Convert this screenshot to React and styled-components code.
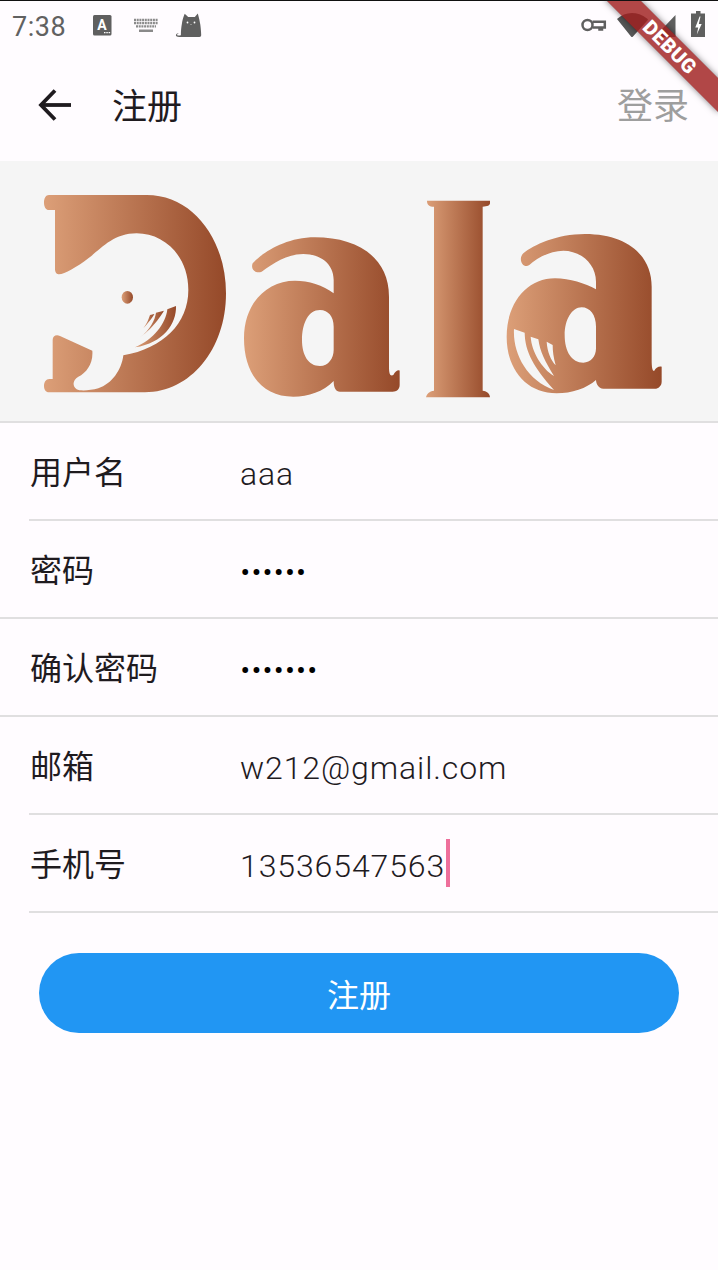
import React from "react";
import styled, { createGlobalStyle } from "styled-components";

const fields = [
  { label: "用户名", value: "aaa", inset: true },
  { label: "密码", value: "••••••", secret: true },
  { label: "确认密码", value: "•••••••", secret: true },
  { label: "邮箱", value: "w212@gmail.com", inset: true },
  { label: "手机号", value: "13536547563", inset: true, focused: true },
];

const GlobalStyle = createGlobalStyle`
  html, body {
    margin: 0;
    padding: 0;
    background: #fffcff;
  }
  * {
    box-sizing: border-box;
  }
`;

const BackIcon = () => (
  <svg width="36" height="36" viewBox="0 0 36 36" fill="none" stroke="#1f1b1f" strokeWidth="3.8">
    <path d="M34 18H5" />
    <path d="M18 3.5 4 18l14 14.500" />
  </svg>
);

// viewBox uses page coordinates so the glyphs can be read straight off the screenshot
const StatusLeftIcons = () => (
  <svg width="112" height="28" viewBox="91 12 112 28" fill="#5f5f5f">
    <rect x="93" y="15" width="18.500" height="20.500" rx="1.500" />
    <text x="102" y="30" fontFamily="Roboto" fontWeight="700" fontSize="14" fill="#fff" textAnchor="middle">A</text>
    <path d="M104 32h1.500v1.300H104zM106.300 32h1.500v1.300h-1.500zM108.600 32h1.500v1.300h-1.500z" fill="#fff" />
    <g stroke="#8a8a8a" strokeWidth="2.300" strokeDasharray="2 .7" fill="none">
      <path d="M134 20h24" />
      <path d="M134 23.200h24" />
      <path d="M136 26.400h20" />
    </g>
    <path d="M139 29.500h14v2.500h-14z" fill="#8a8a8a" />
    <path d="M182.600 37c-2.800 0-4.500-.2-5.800-.6-1-.4-1.200-1.700-.3-2.500.7-.6 1.700-.6 2.300-.1-.8-.1-1.500.2-1.700.8-.2.700.5 1 1.300 1h1.800c.4 0 .7-.3.700-.8 0-4 .4-8 1-11 .3-2.300.8-5.300 2.800-10l3.500 3.200h6.600l3-3.600c1.300 4.400 2 8 2.500 11 .5 3.600.8 7.400.9 10.600 0 1.200-.6 2-1.800 2z" />
    <circle cx="187.500" cy="22.500" r=".9" fill="#fff" />
    <circle cx="194.500" cy="22.500" r=".9" fill="#fff" />
    <path d="M190.200 24.200h1.600l-.8.800z" fill="#fff" />
  </svg>
);

const StatusRightIcons = () => (
  <svg width="128" height="36" viewBox="579 8 128 36" fill="#5f5f5f">
    <g fill="none" stroke="#5f5f5f" strokeWidth="2.500">
      <circle cx="587.500" cy="25" r="5" />
      <path d="M592.500 21.800H604.800V27.500H602V29.500H599.500V27.500H592.500" />
    </g>
    <path d="M617 19c8-7.500 20-8.200 30-.5 1 .8 1.200 1 .4 2L633 36.500c-.7.800-1.300.8-2 0z" fill="#575757" />
    <path d="M675.500 15V37H654.500z" />
    <path d="M696 13.500V11h4.500v2.500H705V37H691V13.500z" />
    <path d="M699.600 16.500l-4.300 11h2.900l-1.400 7 4.900-10.500h-2.900l1.700-7.500z" fill="#fff" />
  </svg>
);

const WhaleLogo = () => (
  <svg width="718" height="260" viewBox="0 0 718 260">
    <defs>
      <linearGradient id="copper">
        <stop offset="0" stopColor="#dc9f78" />
        <stop offset="1" stopColor="#954929" />
      </linearGradient>
    </defs>
    <g transform="translate(30 19) scale(0.33333)" fill="url(#copper)">
      <path d="M57 45H350C490 45 588 180 588 340C588 510 480 637 345 637H57C47 637 42 628 42 618C42 606 48 597 58 597H68V480C68 468 78 463 90 468L187 512C190 550 170 578 145 590C128 600 126 618 140 628C150 634 180 632 205 625C245 612 275 570 280 526C400 505 475 430 475 330C475 225 400 160 320 160C250 160 215 205 175 235C140 262 100 285 85 283C78 282 75 276 75 268V90H57C47 90 42 80 42 68C42 55 47 45 57 45Z" />
      <ellipse cx="292" cy="352" rx="17" ry="19" />
      <path d="M315 502C400 490 440 430 438 378L412 388C408 430 370 480 315 502Z" />
      <path d="M330 472C375 440 400 395 402 392L378 398C375 420 360 450 330 472Z" />
      <path d="M340 445C355 430 372 405 373 402L360 405C355 420 350 432 340 445Z" />
    </g>
    <g transform="translate(240 19) scale(0.33333)" fill="url(#copper)">
      <path d="M38 250C60 225 130 172 225 172C350 172 447 230 447 350V560C447 580 450 590 460 585C465 575 475 568 479 572V615C479 628 470 635 458 635H300C288 635 281 625 281 603C250 635 205 650 160 650C70 650 12 585 12 475C12 370 80 302 165 302C205 302 250 315 281 340V300C281 250 240 222 190 222C140 222 100 250 65 275C50 282 30 270 38 250Z M281 440C281 410 265 390 240 390C205 390 186 430 186 480C186 525 205 558 240 558C265 558 281 535 281 510Z" fillRule="evenodd" />
      <path d="M561 62H750V70C750 76 742 80 728 80V632C742 634 750 642 750 652H558C560 642 568 634 582 632V80C568 80 561 74 561 62Z" />
    </g>
    <g transform="translate(490 59) scale(0.33333)" fill="url(#copper)">
      <path
        fillRule="evenodd"
        d="M100 100C130 75 200 42 285 42C410 42 485 105 485 200V420C485 445 488 455 493 452C497 445 505 438 515 440V485C515 498 505 506 495 506H340C325 506 318 490 318 480C290 505 245 520 200 520C110 520 50 450 50 350C50 250 110 175 195 175C240 175 285 190 318 208V185C318 130 270 92 220 92C180 92 140 115 118 135C100 148 82 118 100 100Z M318 320C318 285 300 262 275 262C245 262 224 300 224 345C224 395 245 428 280 428C302 428 318 410 318 385Z M72 327C68 400 110 480 192 510C130 440 105 395 104 338Z M122 350C125 395 155 445 192 468C165 425 150 395 145 358Z M170 365C172 395 182 420 197 436C190 412 188 392 188 375Z"
      />
    </g>
  </svg>
);

export default function App() {
  return (
    <Page>
      <GlobalStyle />
      <StatusBar>
        <Clock>7:38</Clock>
        <StatusLeftIcons />
        <StatusRight>
          <StatusRightIcons />
        </StatusRight>
      </StatusBar>
      <AppBar>
        <BackButton>
          <BackIcon />
        </BackButton>
        <Title>注册</Title>
        <LoginLink>登录</LoginLink>
      </AppBar>
      <LogoBand>
        <WhaleLogo />
      </LogoBand>
      <Form>
        {fields.map((field) => (
          <Row key={field.label} $inset={field.inset}>
            <Label>{field.label}</Label>
            <Value $secret={field.secret}>
              {field.value}
              {field.focused && <Cursor />}
            </Value>
          </Row>
        ))}
      </Form>
      <SubmitWrap>
        <SubmitButton>注册</SubmitButton>
      </SubmitWrap>
      <DebugBanner>DEBUG</DebugBanner>
    </Page>
  );
}

const Page = styled.div`
  position: relative;
  width: 718px;
  height: 1270px;
  overflow: hidden;
  background: #fffcff;
  border-top: 1px solid #111;
  font-family: "Noto Sans CJK SC", Roboto, sans-serif;
`;

const StatusBar = styled.div`
  display: flex;
  align-items: center;
  height: 50px;
  padding-left: 12px;
`;

const Clock = styled.span`
  width: 79px;
  padding-top: 2px;
  font-family: Roboto, sans-serif;
  font-size: 27px;
  color: #616161;
  letter-spacing: 0.5px;
`;

const StatusRight = styled.div`
  display: flex;
  margin-left: auto;
  padding-right: 11px;
`;

const AppBar = styled.header`
  display: flex;
  align-items: center;
  height: 110px;
  padding: 0 29px 6px 37px;
`;

const BackButton = styled.div`
  display: flex;
  width: 75px;
  margin-top: 3px;
`;

const Title = styled.h1`
  margin: 0;
  font-size: 35px;
  font-weight: 400;
  color: #1f1b1f;
`;

const LoginLink = styled.span`
  margin-left: auto;
  font-size: 36px;
  color: #9e9e9e;
`;

const LogoBand = styled.div`
  display: flex;
  height: 262px;
  background: #f5f5f5;
  border-bottom: 2px solid #e0dfe0;
`;

const Form = styled.div`
  display: flex;
  flex-direction: column;
`;

const Row = styled.div`
  display: flex;
  align-items: center;
  height: 98px;
  margin-left: ${({ $inset }) => ($inset ? "29px" : "0")};
  padding-left: ${({ $inset }) => ($inset ? "1px" : "30px")};
  border-bottom: 2px solid #e0dfe0;
`;

const Label = styled.span`
  width: 210px;
  padding-bottom: 2px;
  font-size: 32px;
  color: #1f1b1f;
`;

const Value = styled.span`
  display: flex;
  align-items: center;
  padding-top: ${({ $secret }) => ($secret ? "5px" : "6px")};
  font-family: Roboto, sans-serif;
  font-size: 32px;
  font-weight: 300;
  letter-spacing: ${({ $secret }) => ($secret ? "0.8px" : "0.9px")};
  color: ${({ $secret }) => ($secret ? "#000" : "#1f1b1f")};
`;

const Cursor = styled.span`
  width: 4px;
  height: 48px;
  margin-top: -6px;
  margin-left: 1px;
  background: #ee6f9b;
`;

const SubmitWrap = styled.div`
  display: flex;
  padding: 40px 39px 0;
`;

const SubmitButton = styled.button`
  width: 640px;
  height: 80px;
  border: none;
  border-radius: 40px;
  background: #2196f3;
  color: #fff;
  font-family: inherit;
  font-size: 32px;
`;

const DebugBanner = styled.div`
  position: absolute;
  top: 34px;
  left: 590px;
  width: 160px;
  height: 24px;
  line-height: 24px;
  text-align: center;
  transform: rotate(45deg);
  background: rgba(160, 30, 30, 0.82);
  box-shadow: 0 0 6px rgba(0, 0, 0, 0.5);
  color: #fff;
  font-family: Roboto, sans-serif;
  font-size: 20px;
  font-weight: 900;
  letter-spacing: 0.5px;
`;
